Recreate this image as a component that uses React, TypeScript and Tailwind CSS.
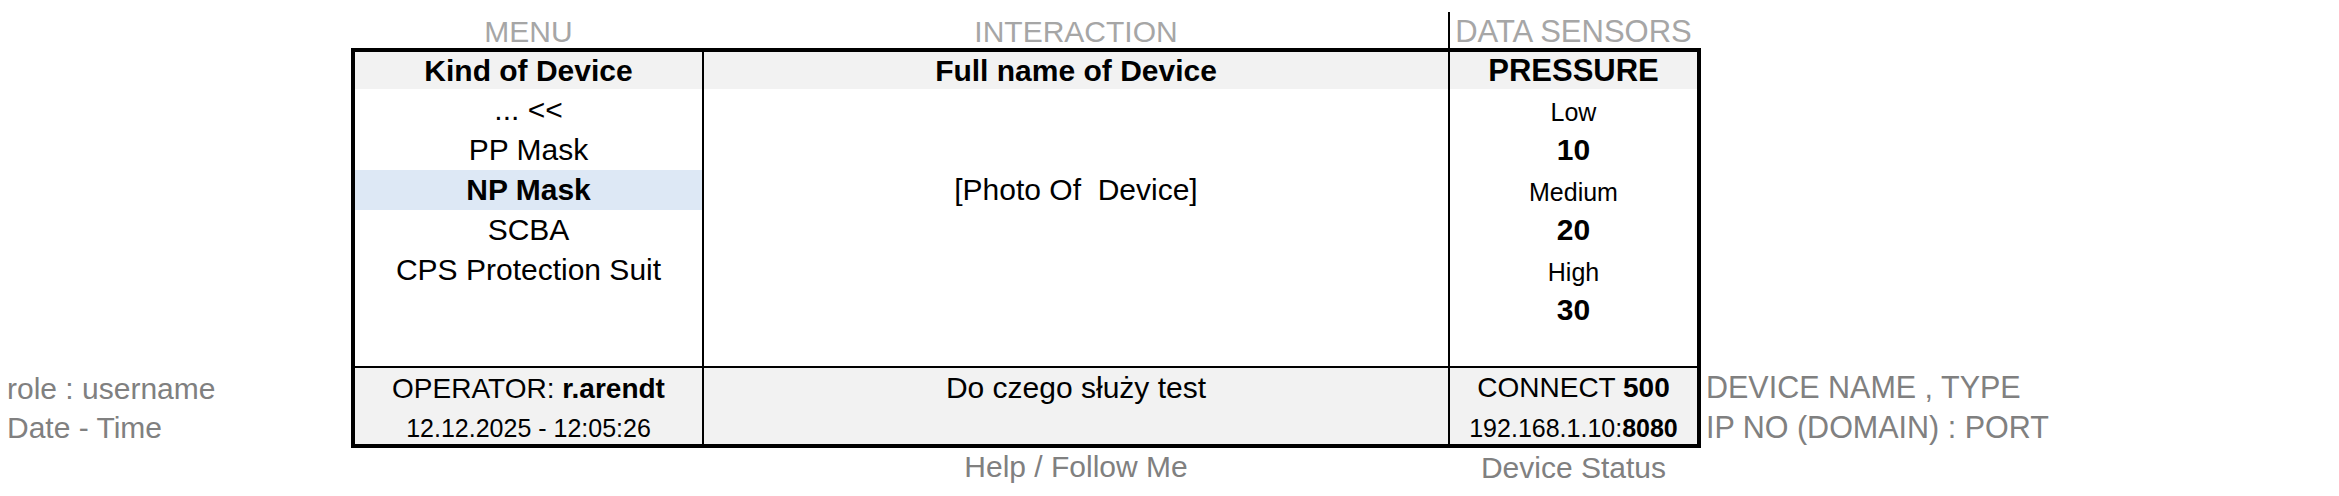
import React from 'react';

const devices = ['... <<', 'PP Mask', 'NP Mask', 'SCBA', 'CPS Protection Suit'];

const levels = [
  { label: 'Low', value: '10' },
  { label: 'Medium', value: '20' },
  { label: 'High', value: '30' },
];

export default function App() {
  const selected = 'NP Mask';

  return (
    <div className="w-[2339px] h-[496px] bg-white flex overflow-hidden text-black font-['Liberation_Sans',Arial,sans-serif]">
      {/* left side notes */}
      <div className="w-[351px] shrink-0 pt-[369px] pl-[7px] text-[30px] text-[#808080] whitespace-nowrap">
        <div className="h-[40px] leading-[40px]">role : username</div>
        <div className="h-[38px] leading-[38px]">Date - Time</div>
      </div>

      {/* main panel */}
      <div className="w-[1350px] shrink-0 flex flex-col">
        {/* section captions */}
        <div className="h-[48px] flex text-[#a6a6a6]">
          <div className="w-[4px] shrink-0" />
          <div className="w-[347px] shrink-0 pt-[17px] leading-[30px] text-[30px] text-center">MENU</div>
          <div className="w-[2px] shrink-0" />
          <div className="w-[744px] shrink-0 pt-[17px] leading-[30px] text-[30px] text-center">INTERACTION</div>
          <div className="w-[2px] shrink-0 mt-[12px] bg-black" />
          <div className="w-[247px] shrink-0 pt-[17px] leading-[30px] text-[31px] text-center whitespace-nowrap">
            DATA SENSORS
          </div>
        </div>

        {/* table */}
        <div className="h-[400px] border-4 border-black flex">
          {/* kind of device */}
          <div className="w-[349px] shrink-0 border-r-2 border-black flex flex-col">
            <div className="h-[37px] leading-[38px] bg-[#f2f2f2] text-center text-[30px] font-bold">Kind of Device</div>
            <div className="flex-1 flex flex-col pt-[1px]">
              {devices.map((d) => (
                <div
                  key={d}
                  className={`h-[40px] leading-[40px] text-center text-[30px] whitespace-nowrap ${
                    d === selected ? 'bg-[#dde8f5] font-bold' : ''
                  }`}
                >
                  {d}
                </div>
              ))}
            </div>
            <div className="h-[78px] border-t-2 border-black bg-[#f2f2f2] text-center whitespace-nowrap">
              <div className="h-[40px] leading-[41px] text-[28px]">
                OPERATOR: <span className="font-bold">r.arendt</span>
              </div>
              <div className="h-[36px] leading-[41px] text-[25px]">12.12.2025 - 12:05:26</div>
            </div>
          </div>

          {/* full name / photo */}
          <div className="w-[746px] shrink-0 border-r-2 border-black flex flex-col">
            <div className="h-[37px] leading-[38px] bg-[#f2f2f2] text-center text-[30px] font-bold">Full name of Device</div>
            <div className="flex-1 pt-[81px]">
              <div className="h-[40px] leading-[40px] text-center text-[30px] whitespace-pre">[Photo Of  Device]</div>
            </div>
            <div className="h-[78px] border-t-2 border-black bg-[#f2f2f2] text-center">
              <div className="h-[40px] leading-[40px] text-[30px]">Do czego służy test</div>
            </div>
          </div>

          {/* sensor values */}
          <div className="flex-1 flex flex-col">
            <div className="h-[37px] leading-[38px] bg-[#f2f2f2] text-center text-[31px] font-bold">PRESSURE</div>
            <div className="flex-1 flex flex-col pt-[1px]">
              {levels.map((l) => (
                <React.Fragment key={l.label}>
                  <div className="h-[40px] leading-[44px] text-center text-[25px]">{l.label}</div>
                  <div className="h-[40px] leading-[40px] text-center text-[30px] font-bold">{l.value}</div>
                </React.Fragment>
              ))}
            </div>
            <div className="h-[78px] border-t-2 border-black bg-[#f2f2f2] text-center whitespace-nowrap">
              <div className="h-[40px] leading-[39px] text-[28px]">
                CONNECT <span className="font-bold">500</span>
              </div>
              <div className="h-[36px] leading-[41px] text-[25px]">
                192.168.1.10:<span className="font-bold">8080</span>
              </div>
            </div>
          </div>
        </div>

        {/* footer captions */}
        <div className="h-[48px] flex text-[30px] text-[#808080] whitespace-nowrap">
          <div className="w-[353px] shrink-0" />
          <div className="w-[744px] shrink-0 pt-[2px] leading-[34px] text-center">Help / Follow Me</div>
          <div className="w-[2px] shrink-0" />
          <div className="w-[247px] shrink-0 pt-[3px] leading-[34px] text-center">Device Status</div>
        </div>
      </div>

      {/* right side notes */}
      <div className="flex-1 pt-[368px] pl-[5px] text-[30.5px] text-[#808080] whitespace-nowrap">
        <div className="h-[40px] leading-[39px]">DEVICE NAME , TYPE</div>
        <div className="h-[38px] leading-[38px]">IP NO (DOMAIN) : PORT</div>
      </div>
    </div>
  );
}
